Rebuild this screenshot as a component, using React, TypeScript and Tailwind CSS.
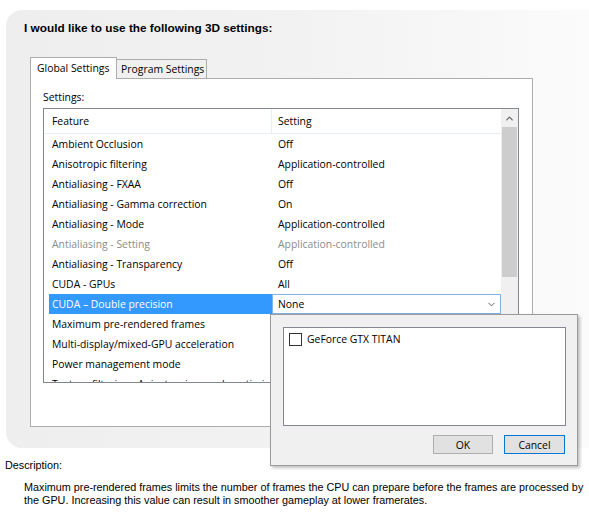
import { ChevronDown, ChevronUp } from "lucide-react";

const rows: { feature: string; setting: string; disabled?: boolean }[] = [
  { feature: "Ambient Occlusion", setting: "Off" },
  { feature: "Anisotropic filtering", setting: "Application-controlled" },
  { feature: "Antialiasing - FXAA", setting: "Off" },
  { feature: "Antialiasing - Gamma correction", setting: "On" },
  { feature: "Antialiasing - Mode", setting: "Application-controlled" },
  { feature: "Antialiasing - Setting", setting: "Application-controlled", disabled: true },
  { feature: "Antialiasing - Transparency", setting: "Off" },
  { feature: "CUDA - GPUs", setting: "All" },
];

const rowsAfter = [
  "Maximum pre-rendered frames",
  "Multi-display/mixed-GPU acceleration",
  "Power management mode",
  "Texture filtering - Anisotropic sample optimization",
];

const ui = "font-['Open_Sans','Noto_Sans',sans-serif]";

export default function App() {
  return (
    <div className={`relative w-[589px] h-[512px] overflow-hidden bg-white text-black ${ui}`}>
      {/* main gray panel */}
      <div className="ml-[6px] mt-[10px] h-[438px] rounded-l-[16px] bg-gradient-to-r from-[#eeeeee] via-[#f2f2f2] to-[#fbfbfb] pl-[18px] pt-[11px]">
        <h1 className="font-['Liberation_Sans',sans-serif] text-[11.8px] leading-[14px] font-bold">
          I would like to use the following 3D settings:
        </h1>

        {/* tabs */}
        <div className="mt-[22px] ml-[6px] flex items-end whitespace-nowrap">
          <div className="relative z-10 -mb-px h-[22px] w-[87px] border border-b-0 border-[#adadad] bg-white pl-[6px] pt-[3px] text-[10.4px] leading-[15px]">
            Global Settings
          </div>
          <div className="h-[19px] w-[91px] -ml-px border border-b-0 border-[#adadad] bg-[#f0f0f0] pl-[4px] pt-[2px] text-[10.4px] leading-[15px]">
            Program Settings
          </div>
        </div>

        <div className="ml-[6px] h-[349px] w-[503px] border border-[#adadad] bg-white pl-[11px] pt-[11px]">
          <div className="text-[10.4px] leading-[15px] pl-px">Settings:</div>

          {/* list box */}
          <div className="mt-[3px] ml-px flex h-[275px] w-[476px] border border-[#828790] bg-white">
            <div className="flex-1 overflow-hidden">
              <div className="flex h-[25px] border-b border-[#e8eef6] text-[10.4px] leading-[25px]">
                <div className="w-[228px] border-r border-[#e8eef6] pl-[8px]">Feature</div>
                <div className="pl-[6px]">Setting</div>
              </div>
              {rows.map((r) => (
                <div
                  key={r.feature}
                  className={`ml-[5px] flex h-[20px] text-[10.4px] leading-[20px] ${r.disabled ? "text-[#8c8c8c]" : ""}`}
                >
                  <div className="w-[223px] pl-[3px]">{r.feature}</div>
                  <div className="pl-[6px]">{r.setting}</div>
                </div>
              ))}
              <div className="ml-[5px] flex h-[20px] text-[10.4px] leading-[18px]">
                <div className="w-[223px] bg-[#3399ff] pl-[3px] text-white leading-[20px]">CUDA – Double precision</div>
                <div className="flex flex-1 items-center justify-between border border-[#7eb4ea] bg-white pl-[5px] pr-[3px]">
                  <span>None</span>
                  <ChevronDown size={11} strokeWidth={2} className="text-[#555]" />
                </div>
              </div>
              {rowsAfter.map((f) => (
                <div key={f} className="ml-[5px] flex h-[20px] text-[10.4px] leading-[20px]">
                  <div className="w-[223px] whitespace-nowrap pl-[3px]">{f}</div>
                </div>
              ))}
            </div>

            {/* scrollbar */}
            <div className="flex w-[17px] flex-col bg-[#f0f0f0]">
              <div className="flex h-[18px] items-center justify-center">
                <ChevronUp size={11} strokeWidth={2.5} className="text-[#606060]" />
              </div>
              <div className="mx-px h-[150px] bg-[#cdcdcd]" />
            </div>
          </div>
        </div>
      </div>

      {/* description */}
      <div className="pl-[5px] pt-[11px] font-['Liberation_Sans',sans-serif] text-[10.8px] leading-[13px]">
        <div>Description:</div>
        <p className="mt-[9px] pl-[19px]">
          Maximum pre-rendered frames limits the number of frames the CPU can prepare before the frames are processed by the GPU. Increasing this value can result in smoother gameplay at lower framerates.
        </p>
      </div>

      {/* GPU selection popup */}
      <div className="absolute left-[270px] top-[314px] flex h-[152px] w-[308px] flex-col border border-[#9a9a9a] bg-[#f0f0f0] px-[12px] pt-[12px] shadow-[2px_2px_3px_rgba(0,0,0,0.25)]">
        <div className="h-[99px] w-[283px] border border-[#828790] bg-white px-[5px] pt-[3px]">
          <label className="flex items-center gap-[5px] text-[10.4px] leading-[16px]">
            <span className="h-[13px] w-[13px] border border-[#333333] bg-white" />
            GeForce GTX TITAN
          </label>
        </div>
        <div className="mt-[9px] flex justify-end gap-[11px] text-[10.4px]">
          <button className="h-[19px] w-[60px] border border-[#adadad] bg-[#e1e1e1] leading-[16px]">OK</button>
          <button className="h-[19px] w-[61px] border border-[#0078d7] bg-[#e1e1e1] leading-[16px]">Cancel</button>
        </div>
      </div>
    </div>
  );
}
